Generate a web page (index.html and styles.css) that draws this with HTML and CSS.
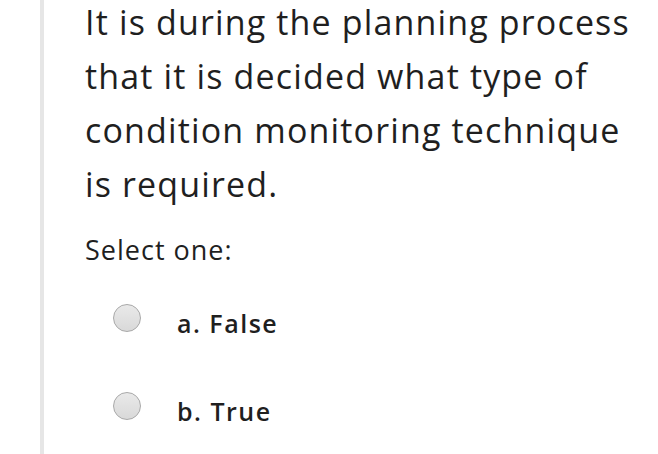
FILE: index.html
```html
<!DOCTYPE html>
<html>
<head>
<meta charset="utf-8">
<link rel="stylesheet" href="styles.css">
</head>
<body>
<div class="card-above"></div>
<div class="question">
  <div class="qtext">It is during the planning process<br>that it is decided what type of<br>condition monitoring technique<br>is required.</div>
  <div class="prompt">Select one:</div>
  <div class="answers">
    <label class="option"><span class="radio"></span><span class="label">a. False</span></label>
    <label class="option"><span class="radio"></span><span class="label">b. True</span></label>
  </div>
</div>
</body>
</html>
```
FILE: styles.css
```css
html, body {
  margin: 0;
  padding: 0;
  background: #ffffff;
  height: 454px;
  overflow: hidden;
}
body {
  font-family: "Open Sans", sans-serif;
  color: #1f1f1f;
}
.card-above {
  height: 0;
  margin: 0 20px 0 60px;
  box-shadow: 0 2px 8px rgba(0, 0, 0, 0.06);
}
.question {
  margin-left: 40px;
  border-left: 4px solid #e6e6e6;
  padding-left: 41px;
  height: 460px;
}
.qtext {
  font-size: 34px;
  letter-spacing: 1.15px;
  line-height: 54px;
  margin-top: -5px;
  white-space: nowrap;
}
.prompt {
  font-size: 27px;
  letter-spacing: 1px;
  line-height: 36px;
  margin-top: 21px;
}
.answers {
  display: flex;
  flex-direction: column;
  gap: 52px;
  margin-top: 37px;
  padding-left: 28px;
}
.option {
  display: flex;
  align-items: center;
  height: 36px;
}
.radio {
  width: 26px;
  height: 26px;
  border-radius: 50%;
  border: 1px solid #a8a8a8;
  background: linear-gradient(#e9e9e9, #d9d9d9);
  box-sizing: content-box;
  margin-bottom: 10px;
}
.label {
  font-size: 25px;
  font-weight: 600;
  letter-spacing: 1.5px;
  margin-left: 36px;
}
```
